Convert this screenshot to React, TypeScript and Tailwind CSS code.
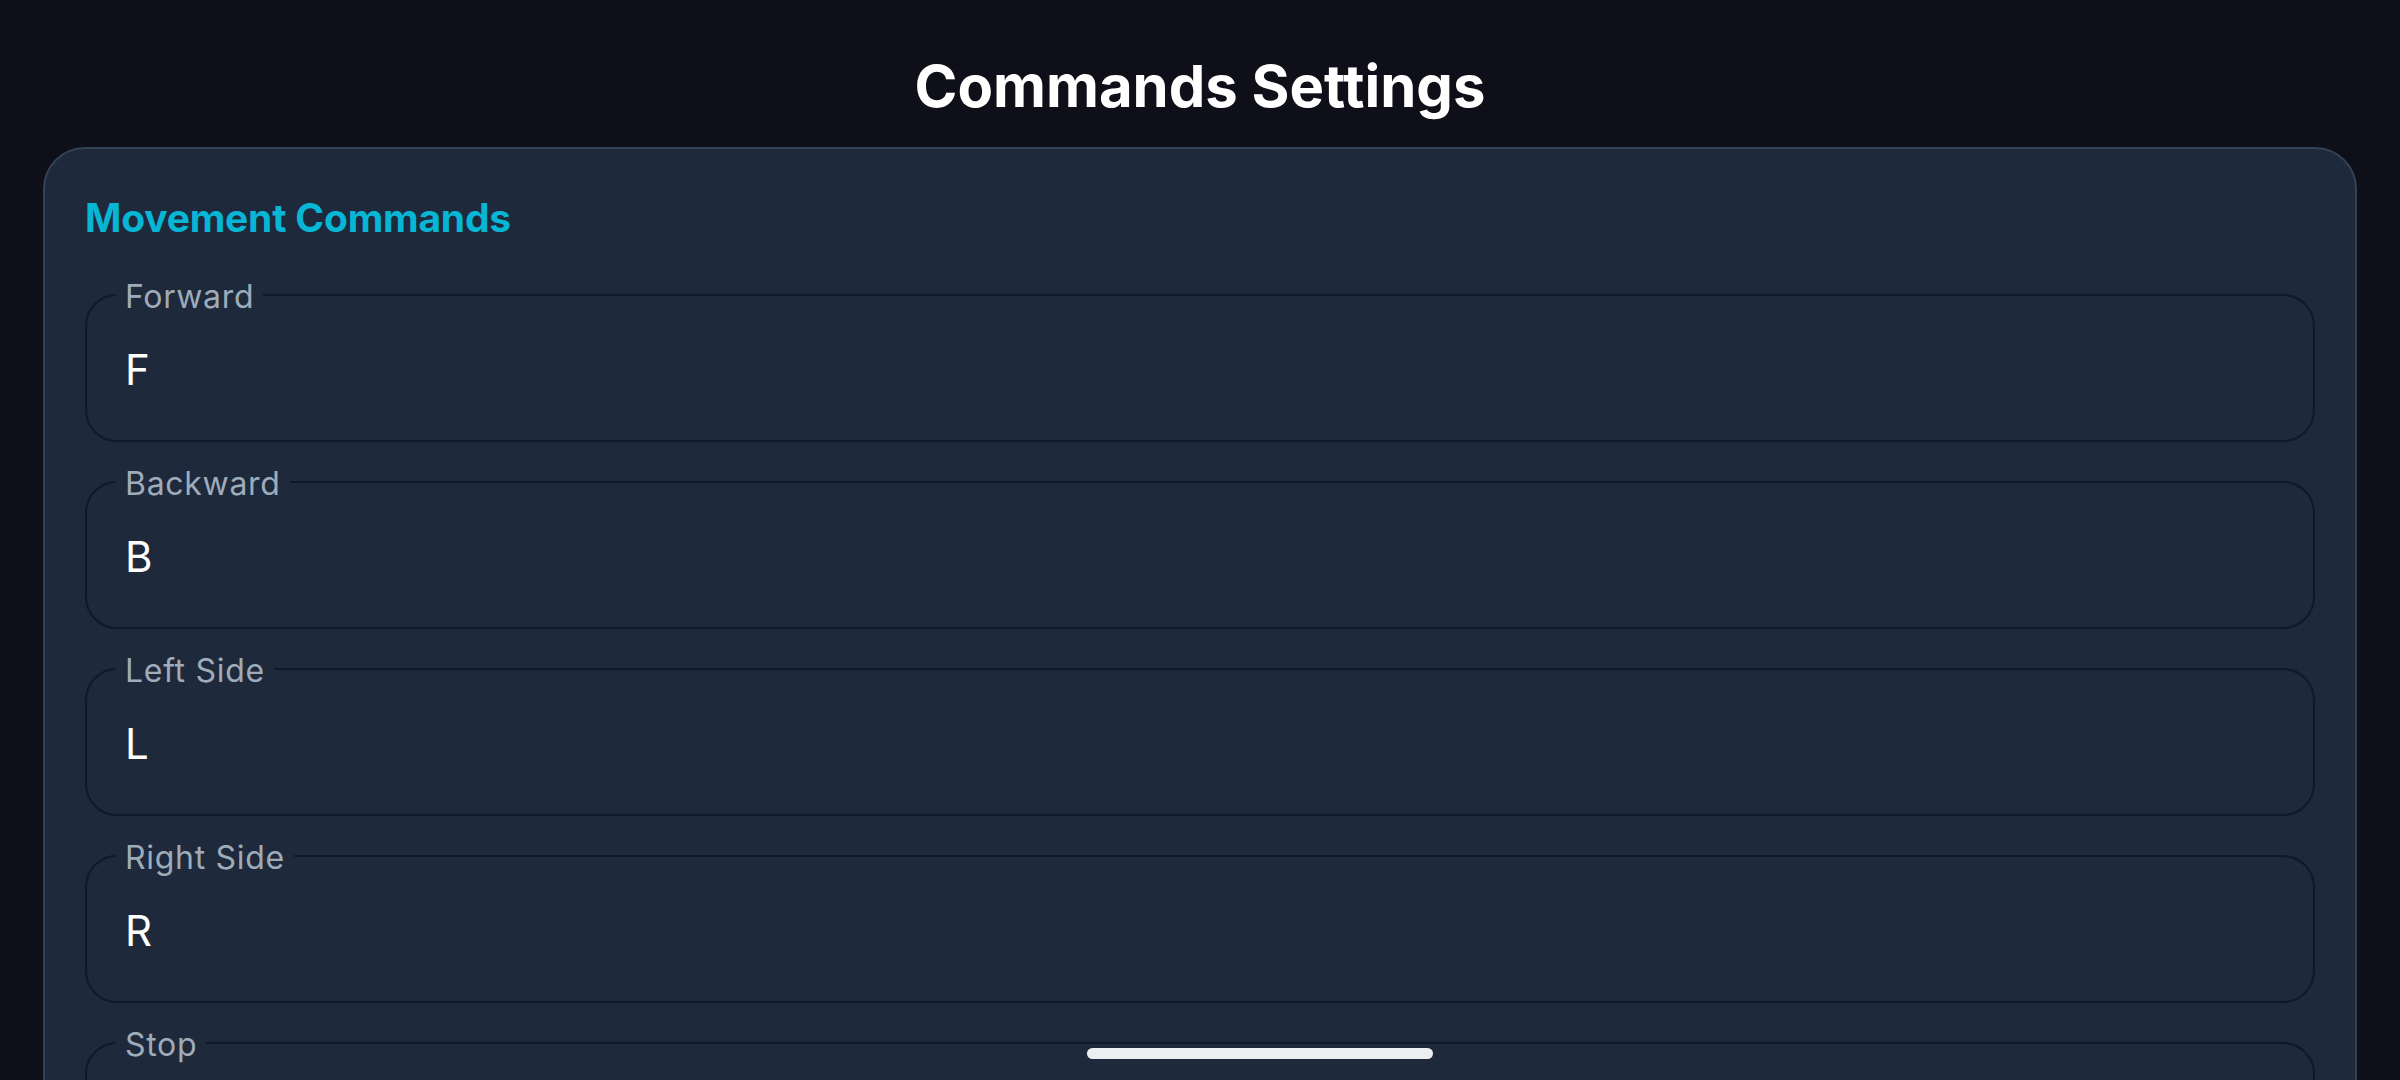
import React from 'react';

const movementCommands = [
  { label: 'Forward', value: 'F' },
  { label: 'Backward', value: 'B' },
  { label: 'Left Side', value: 'L' },
  { label: 'Right Side', value: 'R' },
  { label: 'Stop', value: 'S' },
];

function CommandField({ label, value }: { label: string; value: string }) {
  return (
    <div className="relative h-[148px] shrink-0 rounded-[32px] border-2 border-[#111827] pl-[38px] pt-[49px]">
      {/* floating label sits on the outline */}
      <span className="absolute left-[29px] -top-[18px] bg-[#1e293b] px-[9px] text-[32px] leading-[38px] tracking-[0.7px] text-[#9eabb9]">
        {label}
      </span>
      <div className="text-[42px] leading-[50px] text-white">{value}</div>
    </div>
  );
}

export default function App() {
  return (
    <div
      className="relative h-screen w-full overflow-hidden bg-[#0e0f19] pt-[51px]"
      style={{ fontFamily: 'Inter, "Noto Sans", sans-serif' }}
    >
      <h1 className="text-center text-[58px] font-bold leading-[70px] text-white">Commands Settings</h1>

      <div className="mx-[43px] mt-[26px] rounded-[42px] border-2 border-[#334155] bg-[#1e293b] px-[40px] pt-[45px] pb-10">
        <h2 className="text-[39px] font-bold leading-[48px] tracking-[-0.2px] text-[#06b6d4]">Movement Commands</h2>
        <div className="mt-[52px] flex flex-col gap-[39px]">
          {movementCommands.map((c) => (
            <CommandField key={c.label} label={c.label} value={c.value} />
          ))}
        </div>
      </div>

      {/* system home indicator */}
      <div className="absolute left-[1087px] top-[1048px] h-[11px] w-[346px] rounded-full bg-[#eceef1]" />
    </div>
  );
}
